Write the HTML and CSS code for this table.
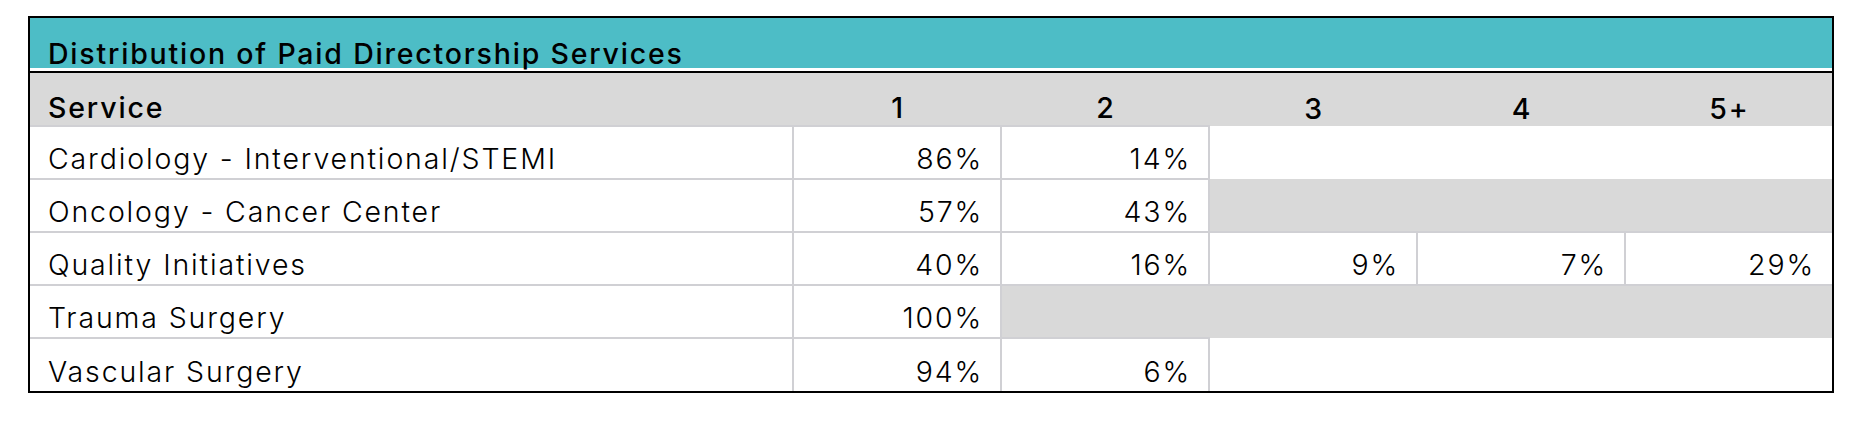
FILE: index.html
```html
<!DOCTYPE html>
<html lang="en">
<head>
<meta charset="utf-8">
<title>Distribution of Paid Directorship Services</title>
<link rel="stylesheet" href="styles.css">
</head>
<body>
<div class="report">
  <div class="report-title">Distribution of Paid Directorship Services</div>
  <div class="grid">
    <table class="dist">
      <colgroup>
        <col class="c-service">
        <col class="c-num">
        <col class="c-num">
        <col class="c-num">
        <col class="c-num">
        <col class="c-last">
      </colgroup>
      <thead>
        <tr class="head">
          <th class="lbl">Service</th>
          <th>1</th>
          <th>2</th>
          <th>3</th>
          <th>4</th>
          <th>5+</th>
        </tr>
      </thead>
      <tbody>
        <tr>
          <td class="cell lbl">Cardiology - Interventional/STEMI</td>
          <td class="cell num">86%</td>
          <td class="cell num">14%</td>
          <td class="blank" colspan="3"></td>
        </tr>
        <tr>
          <td class="cell lbl">Oncology - Cancer Center</td>
          <td class="cell num">57%</td>
          <td class="cell num">43%</td>
          <td class="blank fill" colspan="3"></td>
        </tr>
        <tr>
          <td class="cell lbl">Quality Initiatives</td>
          <td class="cell num">40%</td>
          <td class="cell num">16%</td>
          <td class="cell num">9%</td>
          <td class="cell num">7%</td>
          <td class="cell num end">29%</td>
        </tr>
        <tr>
          <td class="cell lbl">Trauma Surgery</td>
          <td class="cell num">100%</td>
          <td class="blank fill" colspan="4"></td>
        </tr>
        <tr class="last">
          <td class="cell lbl">Vascular Surgery</td>
          <td class="cell num">94%</td>
          <td class="cell num">6%</td>
          <td class="blank" colspan="3"></td>
        </tr>
      </tbody>
    </table>
  </div>
</div>
</body>
</html>
```

FILE: styles.css
```css
html, body {
  margin: 0;
  padding: 0;
  background: #ffffff;
}

body {
  font-family: Inter, "Liberation Sans", sans-serif;
  color: #000000;
}

.report {
  margin: 16px 0 0 28px;
  width: 1802px;
  border: 2px solid #000000;
}

.report-title {
  height: 50px;
  background: #4dbdc6;
  border-bottom: 3px solid #ffffff;
  display: flex;
  align-items: flex-end;
  padding-left: 18px;
  font-size: 28.5px;
  font-weight: 500;
  letter-spacing: 1.8px;
  line-height: 1;
}

.grid {
  border-top: 2px solid #000000;
}

.dist {
  border-collapse: collapse;
  table-layout: fixed;
  width: 1802px;
}

.c-service { width: 763px; }
.c-num { width: 208px; }
.c-last { width: 207px; }

.dist tr {
  height: 53px;
}

.dist th,
.dist td {
  padding: 0 17px 5px 19px;
  vertical-align: bottom;
  font-size: 28.5px;
  letter-spacing: 1.85px;
  line-height: 1;
  white-space: nowrap;
}

.dist th {
  background: #d9d9d9;
  font-weight: 500;
  text-align: center;
  padding-bottom: 3px;
}

.dist th.lbl {
  text-align: left;
  padding-left: 18px;
}

.dist td {
  font-weight: 300;
}

.cell {
  border: 2px solid #d0d0d4;
}

.cell.lbl {
  border-left: none;
  text-align: left;
  padding-left: 18px;
}

.num {
  text-align: right;
}

.cell.end {
  border-right: none;
}

.last .cell {
  border-bottom: none;
}

.fill {
  background: #d9d9d9;
}
```
